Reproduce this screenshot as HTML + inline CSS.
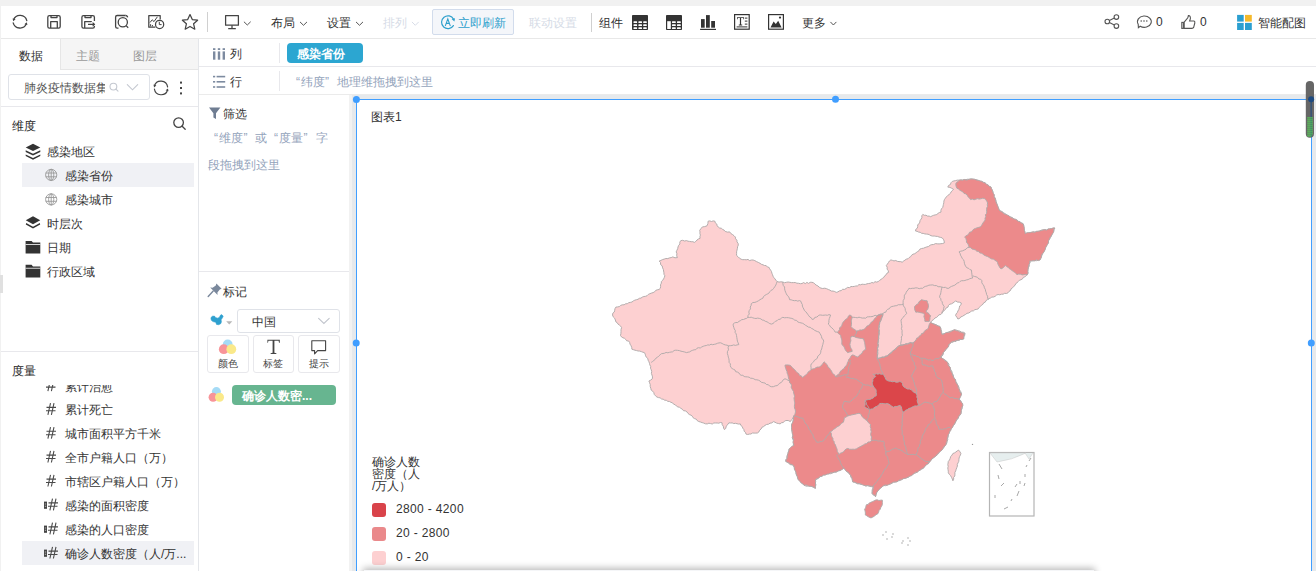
<!DOCTYPE html>
<html><head><meta charset="utf-8">
<style>
*{box-sizing:border-box;margin:0;padding:0}
html,body{width:1316px;height:571px;overflow:hidden;background:#fff;font-family:"Liberation Sans",sans-serif;font-size:12px;color:#333}
.a{position:absolute}
.t{position:absolute;line-height:16px;white-space:nowrap}
svg{position:absolute;overflow:visible}
</style></head><body>
<!-- top strip -->
<div class="a" style="left:0;top:0;width:1316px;height:6px;background:#f1f1f1"></div>
<div class="a" style="left:0;top:6px;width:1px;height:565px;background:#f1f1f1"></div>
<!-- toolbar texts -->
<div class="t" style="left:271px;top:15px">布局</div>
<div class="t" style="left:327px;top:15px">设置</div>
<div class="t" style="left:383px;top:15px;color:#d5dbe6">排列</div>
<div class="a" style="left:432px;top:9px;width:82px;height:26px;background:#f4f6fa;border:1px solid #d2dcec;border-radius:2px"></div>
<div class="t" style="left:458px;top:15px;color:#2ea0cc">立即刷新</div>
<div class="t" style="left:529px;top:15px;color:#d5dbe6">联动设置</div>
<div class="t" style="left:599px;top:15px">组件</div>
<div class="t" style="left:802px;top:15px">更多</div>
<div class="t" style="left:1156px;top:14px">0</div>
<div class="t" style="left:1200px;top:14px">0</div>
<div class="t" style="left:1258px;top:15px">智能配图</div>
<!-- toolbar border -->
<div class="a" style="left:1px;top:38px;width:1315px;height:1px;background:#e8e8e8"></div>

<!-- ===== LEFT PANEL ===== -->
<div class="a" style="left:198px;top:39px;width:1px;height:532px;background:#e4e6ea"></div>
<!-- tabs -->
<div class="a" style="left:60px;top:39px;width:138px;height:30px;background:#f5f5f5"></div>
<div class="a" style="left:60px;top:39px;width:1px;height:30px;background:#e6e6e6"></div>
<div class="a" style="left:60px;top:69px;width:138px;height:1px;background:#e6e6e6"></div>
<div class="t" style="left:19px;top:47.6px;color:#333">数据</div>
<div class="t" style="left:76px;top:47.6px;color:#999">主题</div>
<div class="t" style="left:133px;top:47.6px;color:#999">图层</div>
<!-- search row -->
<div class="a" style="left:8px;top:74px;width:142px;height:26px;border:1px solid #dfe2e8;border-radius:3px"></div>
<div class="t" style="left:24px;top:79.6px;color:#555">肺炎疫情数据集</div>
<div class="a" style="left:105px;top:77px;width:36px;height:20px;background:#fff"></div>
<div class="a" style="left:1px;top:106px;width:197px;height:1px;background:#e8e8ec"></div>
<!-- 维度 -->
<div class="t" style="left:12px;top:117.6px;color:#1e1e1e">维度</div>
<div class="a" style="left:22px;top:163px;width:172px;height:24px;background:#f0f1f5"></div>
<div class="t" style="left:47px;top:143.6px">感染地区</div>
<div class="t" style="left:65px;top:167.6px">感染省份</div>
<div class="t" style="left:65px;top:191.6px">感染城市</div>
<div class="t" style="left:47px;top:215.6px">时层次</div>
<div class="t" style="left:47px;top:239.6px">日期</div>
<div class="t" style="left:47px;top:263.6px">行政区域</div>
<div class="a" style="left:0;top:275px;width:3px;height:18px;background:#e0e0e0"></div>
<div class="a" style="left:1px;top:351px;width:197px;height:1px;background:#e8e8ec"></div>
<div class="t" style="left:12px;top:362.6px;color:#1e1e1e">度量</div>
<div class="a" style="left:22px;top:541px;width:172px;height:24px;background:#f0f1f5"></div>
<div class="a" style="left:1px;top:385px;width:197px;height:186px;overflow:hidden">
  <svg style="left:0;top:0" width="197" height="186"><path d="M49.5,-5.5000000000000115 L46.9,6.099999999999989 M53,-5.5000000000000115 L50.4,6.099999999999989 M45.5,-1.3000000000000114 H55 M45,2.0999999999999885 H54.5 M49.5,18.199999999999978 L46.9,29.799999999999976 M53,18.199999999999978 L50.4,29.799999999999976 M45.5,22.399999999999977 H55 M45,25.799999999999976 H54.5 M49.5,42.10000000000001 L46.9,53.70000000000001 M53,42.10000000000001 L50.4,53.70000000000001 M45.5,46.30000000000001 H55 M45,49.70000000000001 H54.5 M49.5,65.90000000000002 L46.9,77.50000000000003 M53,65.90000000000002 L50.4,77.50000000000003 M45.5,70.10000000000002 H55 M45,73.50000000000003 H54.5 M49.5,89.90000000000002 L46.9,101.50000000000003 M53,89.90000000000002 L50.4,101.50000000000003 M45.5,94.10000000000002 H55 M45,97.50000000000003 H54.5 M51.5,113.69999999999997 L48.9,125.29999999999998 M55,113.69999999999997 L52.4,125.29999999999998 M47.5,117.89999999999998 H57 M47,121.29999999999998 H56.5 M51.5,137.7 L48.9,149.29999999999998 M55,137.7 L52.4,149.29999999999998 M47.5,141.89999999999998 H57 M47,145.29999999999998 H56.5 M51.5,161.90000000000003 L48.9,173.50000000000003 M55,161.90000000000003 L52.4,173.50000000000003 M47.5,166.10000000000002 H57 M47,169.50000000000003 H56.5" fill="none" stroke="#4a4a4a" stroke-width="1.1"/></svg>
  <div class="t" style="left:64px;top:-6px">累计治愈</div>
  <div class="t" style="left:64px;top:17px">累计死亡</div>
  <div class="t" style="left:64px;top:41px">城市面积平方千米</div>
  <div class="t" style="left:64px;top:65px">全市户籍人口（万）</div>
  <div class="t" style="left:64px;top:89px">市辖区户籍人口（万）</div>
  <div class="t" style="left:64px;top:113px">感染的面积密度</div>
  <div class="t" style="left:64px;top:137px">感染的人口密度</div>
  <div class="t" style="left:64px;top:161px">确诊人数密度（人/万...</div>
</div>

<!-- ===== SHELF ROWS ===== -->
<div class="a" style="left:199px;top:66px;width:1117px;height:1px;background:#e8e8ec"></div>
<div class="a" style="left:199px;top:94px;width:1117px;height:1px;background:#ebebeb"></div>
<div class="a" style="left:279px;top:43px;width:1px;height:20px;background:#e8e8ec"></div>
<div class="a" style="left:279px;top:71px;width:1px;height:20px;background:#e8e8ec"></div>
<div class="t" style="left:230px;top:45.6px">列</div>
<div class="t" style="left:230px;top:73.6px">行</div>
<div class="a" style="left:287px;top:43px;width:76px;height:20px;background:#2ca6d1;border-radius:4px"></div>
<div class="t" style="left:297px;top:46.1px;color:#fff;font-weight:bold">感染省份</div>
<div class="t" style="left:296px;top:73.6px;color:#93a3bb">“</div><div class="t" style="left:301px;top:73.6px;color:#93a3bb">纬度</div><div class="t" style="left:325px;top:73.6px;color:#93a3bb">”</div><div class="t" style="left:337px;top:73.6px;color:#93a3bb">地理维拖拽到这里</div>

<!-- ===== MIDDLE PANEL ===== -->
<div class="t" style="left:223px;top:105.6px">筛选</div>
<div class="t" style="left:214px;top:129.6px;color:#93a3bb">“</div><div class="t" style="left:219px;top:129.6px;color:#93a3bb">维度</div><div class="t" style="left:243.5px;top:129.6px;color:#93a3bb">”</div><div class="t" style="left:255px;top:129.6px;color:#93a3bb">或</div><div class="t" style="left:274px;top:129.6px;color:#93a3bb">“</div><div class="t" style="left:279px;top:129.6px;color:#93a3bb">度量</div><div class="t" style="left:303.5px;top:129.6px;color:#93a3bb">”</div><div class="t" style="left:315.5px;top:129.6px;color:#93a3bb">字</div>
<div class="t" style="left:208px;top:156.6px;color:#93a3bb">段拖拽到这里</div>
<div class="a" style="left:199px;top:271px;width:151px;height:1px;background:#e8e8ec"></div>
<div class="t" style="left:223px;top:283.6px">标记</div>
<div class="a" style="left:237px;top:309px;width:103px;height:24px;border:1px solid #dfe2e8;border-radius:3px"></div>
<div class="t" style="left:252px;top:313.6px">中国</div>
<div class="a" style="left:207px;top:335px;width:42px;height:38px;border:1px solid #e8e8ec;border-radius:3px"></div>
<div class="a" style="left:253px;top:335px;width:41px;height:38px;border:1px solid #e8e8ec;border-radius:3px"></div>
<div class="a" style="left:298px;top:335px;width:42px;height:38px;border:1px solid #e8e8ec;border-radius:3px"></div>
<div class="t" style="left:218px;top:356.6px;font-size:10px;line-height:14px;color:#444">颜色</div>
<div class="t" style="left:263px;top:356.6px;font-size:10px;line-height:14px;color:#444">标签</div>
<div class="t" style="left:309px;top:356.6px;font-size:10px;line-height:14px;color:#444">提示</div>
<div class="a" style="left:232px;top:385px;width:104px;height:20px;background:#67b590;border-radius:4px"></div>
<div class="t" style="left:242px;top:387.6px;color:#fff;font-weight:bold">确诊人数密...</div>

<!-- ===== CANVAS ===== -->
<div class="a" style="left:349px;top:95px;width:967px;height:476px;background:#e6e9ec"></div>
<div class="a" style="left:349px;top:95px;width:3px;height:476px;background:#f2f2f2"></div>
<div class="a" style="left:356px;top:99px;width:956px;height:472px;background:#fff;border:1px solid #409eff;border-bottom:none"></div>
<div class="t" style="left:371px;top:109px">图表1</div>
<div class="t" style="left:372px;top:456px;line-height:12px;color:#333">确诊人数<br>密度（人<br>/万人）</div>
<div class="a" style="left:372px;top:503px;width:14px;height:14px;border-radius:3px;background:#d9434a"></div>
<div class="a" style="left:372px;top:527px;width:14px;height:14px;border-radius:3px;background:#ea898b"></div>
<div class="a" style="left:372px;top:551px;width:14px;height:14px;border-radius:3px;background:#fdd0d1"></div>
<div class="t" style="left:396px;top:501px;color:#333;letter-spacing:0.35px">2800 - 4200</div>
<div class="t" style="left:396px;top:525px;color:#333;letter-spacing:0.35px">20 - 2800</div>
<div class="t" style="left:396px;top:549px;color:#333;letter-spacing:0.35px">0 - 20</div>
<div class="a" style="left:364px;top:570px;width:730px;height:10px;background:#f5f6f8;box-shadow:0 -1px 7px 1px rgba(0,0,0,0.28)"></div>
<svg style="left:0;top:0" width="1316" height="571" viewBox="0 0 1316 571">
<polygon points="612.5,315.0 612.8,313.2 614.3,312.0 614.7,310.3 615.0,308.6 615.9,307.1 617.6,306.9 619.3,306.6 620.7,305.4 622.3,304.8 624.1,304.8 625.6,303.8 627.3,303.7 628.7,302.7 630.3,302.4 632.0,302.0 633.3,300.9 634.8,300.2 636.4,299.7 638.0,299.3 639.3,298.3 641.0,298.1 642.3,297.1 643.9,296.5 645.5,296.3 647.1,295.7 648.3,294.4 649.9,293.7 651.4,293.1 653.1,292.6 654.6,291.8 655.7,290.4 657.3,289.8 659.0,289.5 660.3,288.3 660.6,286.6 660.5,284.8 661.3,283.2 661.4,281.5 662.6,280.3 663.6,278.9 664.3,277.4 664.9,275.8 664.0,274.4 663.9,272.7 663.6,271.0 663.3,269.4 662.6,267.9 662.2,265.9 660.6,264.6 660.5,262.5 659.2,261.0 660.9,260.4 662.5,259.6 664.2,259.1 665.9,258.5 667.8,258.6 669.4,257.9 671.2,257.6 672.8,256.9 675.0,257.8 677.4,257.6 676.7,255.8 676.9,253.7 676.2,251.9 676.9,250.3 677.7,248.7 678.0,247.0 678.6,245.4 679.9,244.0 679.8,242.1 680.8,240.6 682.7,240.3 684.6,241.0 686.5,240.6 688.0,241.2 689.6,241.4 691.2,241.7 692.9,241.7 694.4,242.4 695.8,241.4 697.0,240.0 698.4,239.0 700.1,238.3 699.9,236.7 700.4,235.1 699.9,233.5 700.0,231.9 699.7,230.3 701.0,228.6 702.4,226.9 704.7,226.6 707.0,225.8 707.9,223.6 708.1,221.2 709.8,220.9 711.5,221.5 713.2,220.9 714.9,221.2 715.3,222.9 716.8,224.1 717.2,225.8 718.3,227.1 719.6,228.0 721.4,228.3 722.6,229.4 724.1,230.1 725.2,231.4 727.4,232.1 729.7,231.9 730.8,233.5 732.5,234.5 734.0,235.7 735.4,237.1 735.6,238.8 736.9,240.2 737.0,241.9 738.1,243.4 738.3,245.1 737.6,246.7 737.4,248.4 737.0,250.1 736.6,251.8 736.6,253.6 736.5,255.3 738.0,256.7 739.4,258.1 741.1,259.2 742.8,259.7 744.5,259.6 746.2,259.8 748.0,259.4 749.6,260.6 751.4,260.0 753.1,260.0 754.8,260.6 756.5,261.6 758.3,262.4 760.0,263.3 761.4,264.3 763.0,264.8 764.5,265.5 766.2,265.6 767.4,267.0 769.1,267.4 769.7,268.9 770.7,270.2 771.5,271.6 771.9,273.2 772.5,274.7 773.1,276.3 773.9,277.7 775.0,278.9 776.0,280.3 777.1,281.5 779.0,282.1 780.9,281.8 782.8,282.0 784.5,282.7 786.3,282.3 788.1,282.0 789.9,282.3 791.6,282.6 793.4,282.6 795.2,282.5 796.9,283.2 798.7,283.3 800.4,283.7 802.0,283.5 803.6,282.6 805.3,283.6 806.9,282.4 808.6,283.4 810.2,282.3 811.8,282.3 813.5,282.7 814.8,284.0 816.2,285.1 817.9,285.9 819.2,287.2 820.9,288.1 822.7,288.5 824.8,288.2 826.6,288.7 828.3,289.5 829.9,290.1 831.3,291.0 833.1,291.1 834.7,291.5 836.2,292.4 837.9,291.9 839.4,290.9 841.2,290.6 842.6,289.3 844.5,289.4 846.1,288.5 847.5,287.4 849.5,287.6 851.0,286.5 852.7,286.6 854.3,286.4 855.8,286.0 857.5,285.9 858.9,284.6 860.6,284.8 862.1,284.2 863.8,284.4 865.4,284.4 867.0,283.8 868.6,283.5 870.3,283.3 871.8,282.5 873.5,282.9 875.0,281.7 876.7,282.1 878.3,281.5 879.6,280.4 881.0,279.4 882.4,278.4 883.8,277.4 884.7,275.8 886.1,274.8 887.0,273.1 888.6,272.4 888.2,270.6 887.1,269.1 887.2,267.2 886.3,265.6 887.4,264.1 888.4,262.6 889.4,261.0 890.9,259.9 892.5,260.4 894.0,260.9 895.8,260.5 897.3,261.3 899.0,261.6 900.6,261.6 902.2,262.2 903.5,261.1 904.9,260.2 906.2,259.2 907.9,258.8 909.1,257.6 910.6,256.7 911.6,255.2 913.0,254.2 914.8,253.7 916.1,252.7 917.5,251.6 919.0,250.7 919.9,249.1 921.6,248.5 923.5,248.2 925.1,247.5 926.9,246.9 928.7,246.4 930.1,245.2 931.9,244.6 933.7,244.5 935.4,243.6 937.3,243.8 939.1,243.9 940.9,243.7 942.7,243.5 944.4,242.8 944.1,240.9 943.3,239.2 942.1,237.8 940.5,237.4 939.0,237.0 937.4,236.4 935.8,236.3 934.2,236.0 932.6,236.1 931.0,235.7 929.5,234.8 928.0,234.2 926.4,234.1 924.8,233.9 923.2,233.4 921.6,233.3 920.2,232.3 918.6,232.1 917.1,231.3 915.5,231.0 915.8,229.3 917.3,228.2 917.7,226.6 917.7,224.7 919.2,223.6 919.8,222.1 920.1,220.4 921.1,219.1 921.9,217.6 921.8,215.8 922.8,214.4 924.3,215.3 926.0,215.2 927.5,216.1 929.2,216.1 930.7,216.7 932.1,215.9 933.6,215.3 935.2,214.9 936.8,214.5 938.0,213.4 939.4,212.5 941.0,212.1 940.9,210.4 941.4,208.9 942.7,207.5 943.1,205.9 943.4,204.4 943.8,202.8 943.9,201.1 944.4,199.6 945.4,198.2 946.4,196.8 947.6,195.6 949.1,194.5 950.4,193.4 951.1,191.8 952.4,190.6 953.5,189.3 951.7,188.3 949.9,187.4 947.8,187.1 948.6,185.4 950.4,184.5 951.0,182.7 952.3,181.4 954.0,180.9 955.7,180.6 957.4,180.1 959.2,180.2 960.9,180.0 962.6,180.0 964.3,179.5 966.0,179.6 967.7,179.2 969.4,179.3 971.1,178.9 972.8,179.1 974.6,179.7 976.5,179.6 978.2,180.6 980.0,181.2 981.9,181.4 983.5,182.3 985.2,182.9 986.3,184.5 988.2,184.9 989.3,186.4 991.0,187.1 991.5,188.7 992.1,190.2 993.0,191.7 992.8,193.5 994.1,194.8 994.1,196.6 995.2,198.0 995.6,199.6 996.1,201.3 996.6,203.0 997.2,204.6 997.7,206.3 998.4,207.9 999.2,209.5 1000.1,211.0 1001.9,211.4 1003.3,212.5 1004.8,213.5 1006.2,214.5 1007.4,215.8 1009.1,216.6 1010.8,217.0 1012.5,217.6 1013.8,218.9 1015.2,219.8 1017.1,219.9 1018.3,221.4 1019.9,221.9 1021.3,222.8 1022.9,223.5 1023.6,225.1 1023.8,226.9 1023.9,228.6 1024.2,230.3 1024.5,232.1 1025.2,233.7 1026.9,233.6 1028.4,233.1 1030.1,232.8 1031.7,232.5 1033.2,231.6 1035.0,232.2 1036.5,231.4 1038.2,231.3 1039.9,231.0 1041.4,230.1 1043.1,229.9 1044.8,229.5 1046.6,230.0 1048.1,229.1 1049.9,229.3 1051.5,228.9 1053.1,228.3 1054.8,228.0 1054.2,229.7 1053.5,231.3 1052.3,232.6 1052.1,234.4 1051.3,236.0 1050.5,237.6 1049.5,239.1 1048.6,240.7 1048.3,242.6 1047.5,244.2 1046.0,245.5 1045.7,247.4 1044.7,248.8 1044.5,250.6 1043.2,251.9 1042.8,253.6 1041.9,255.1 1041.4,256.8 1040.7,258.4 1040.0,259.9 1038.3,260.0 1036.6,260.7 1034.9,260.6 1033.2,260.9 1031.4,260.7 1029.7,261.0 1029.9,262.8 1029.2,264.4 1029.2,266.2 1028.4,267.8 1028.0,269.5 1027.5,271.2 1027.8,273.0 1027.4,274.7 1026.1,275.7 1024.9,276.8 1023.3,277.4 1022.5,278.9 1021.0,279.7 1019.4,280.3 1018.3,281.5 1017.1,282.7 1015.7,283.7 1015.0,285.4 1013.6,286.5 1012.6,287.8 1011.1,288.8 1010.5,290.5 1009.0,291.4 1008.0,292.8 1006.4,293.5 1004.7,293.3 1003.1,294.2 1001.5,294.2 999.8,294.8 998.1,294.5 996.5,295.1 995.2,296.3 993.6,297.0 991.8,297.1 990.4,298.1 988.8,298.6 987.4,299.7 986.0,300.6 985.3,302.1 983.7,302.8 982.9,304.3 981.5,305.2 980.4,306.3 979.3,307.5 978.3,308.8 976.7,309.4 974.9,309.6 973.5,310.8 971.7,311.0 970.2,312.0 968.8,313.0 967.0,313.3 965.6,314.4 964.0,315.3 962.5,316.3 960.8,316.9 959.7,318.4 957.9,319.0 956.9,317.2 955.6,315.6 956.1,313.9 957.3,312.6 957.9,311.0 958.8,309.5 959.3,307.8 959.6,306.0 961.0,304.8 961.3,303.0 959.4,302.2 957.3,302.0 955.6,300.8 954.4,302.1 953.0,302.9 951.6,303.8 949.9,304.2 948.5,305.3 948.0,307.1 946.2,307.9 945.3,309.4 944.2,310.7 942.7,311.7 941.9,313.3 940.8,314.5 938.9,314.8 937.9,316.2 936.7,317.3 935.1,317.9 933.7,319.5 931.9,320.7 930.6,322.4 932.0,323.5 933.7,323.7 935.1,324.7 936.8,324.8 938.1,326.2 939.8,326.4 940.7,327.9 940.8,329.6 941.6,331.1 941.7,332.8 942.1,334.4 943.6,333.5 945.4,333.8 946.8,332.7 948.3,332.1 949.9,331.4 951.4,330.9 953.0,330.3 954.6,329.8 956.4,330.1 958.0,331.1 959.9,331.0 961.4,332.2 963.3,332.2 964.9,333.2 964.8,335.2 963.6,336.9 963.7,338.9 962.0,338.9 960.5,339.4 959.1,340.5 957.3,340.1 956.0,341.5 954.2,341.1 952.9,342.3 951.2,342.3 950.0,343.4 949.1,344.8 948.3,346.2 947.5,347.6 946.3,348.7 945.6,350.2 944.4,351.4 943.4,352.7 943.1,354.5 942.3,355.9 941.0,357.1 942.3,358.3 943.7,359.4 945.4,360.2 946.3,361.8 947.8,362.8 948.9,364.1 948.9,365.9 950.0,367.2 950.2,368.9 951.3,370.3 952.0,371.8 952.1,373.5 953.2,374.8 953.5,376.5 953.9,378.2 955.1,379.5 955.3,381.3 956.6,382.5 957.2,384.1 958.0,385.6 958.9,387.0 959.2,388.6 959.5,390.2 960.7,391.5 961.3,393.0 961.4,394.7 960.3,396.0 959.6,397.5 959.2,399.2 960.6,400.5 961.3,402.4 962.6,403.8 962.5,405.5 962.4,407.2 962.1,408.8 961.1,410.3 961.3,412.1 960.9,413.7 960.0,415.3 958.6,416.5 958.2,418.3 957.0,419.7 955.8,421.1 955.2,422.8 954.4,424.4 953.1,425.7 952.3,427.3 951.1,428.7 950.7,430.5 949.5,431.9 948.6,433.3 948.3,434.9 948.2,436.6 947.6,438.1 947.8,439.8 947.0,441.3 946.9,442.9 946.1,444.4 944.7,445.5 944.2,447.4 942.7,448.4 941.9,450.0 940.0,450.7 939.2,452.3 938.4,453.8 937.2,454.9 936.0,455.9 934.4,456.6 933.5,458.0 932.1,458.9 931.0,460.1 930.1,461.4 929.2,462.8 927.6,463.4 926.4,464.6 925.4,465.8 924.1,466.9 923.3,468.3 921.7,469.0 920.3,470.0 918.6,470.6 917.3,471.9 915.9,473.0 914.0,473.2 912.7,474.5 911.1,475.1 909.7,476.2 908.3,477.3 906.5,477.7 904.8,478.1 903.1,478.7 901.5,479.3 900.1,480.5 898.3,480.8 896.7,481.5 895.2,482.1 893.4,482.1 892.0,483.3 890.4,484.0 888.7,484.2 887.2,485.1 885.6,485.7 883.8,485.5 882.3,486.5 880.7,487.9 878.9,489.1 877.8,491.0 876.6,492.7 876.0,494.7 875.5,496.7 874.5,495.4 872.9,494.8 872.1,493.3 872.0,491.5 872.2,489.8 872.7,488.2 873.2,486.5 871.3,486.7 869.5,486.4 867.8,485.6 865.8,486.1 864.1,485.3 862.6,484.3 860.8,484.4 859.2,483.9 857.5,483.8 856.0,482.9 854.4,482.3 852.8,481.9 852.6,480.1 851.9,478.4 850.7,476.9 850.5,475.1 849.3,474.0 848.5,472.6 847.1,471.7 845.8,470.8 845.2,469.1 843.7,468.3 841.7,469.1 840.0,470.5 838.0,470.7 836.4,472.0 834.4,472.3 832.5,472.8 830.8,473.7 828.8,473.6 827.0,474.0 825.2,474.6 823.4,475.1 821.9,476.2 820.0,476.7 818.6,477.8 817.2,479.1 815.4,479.7 815.0,481.4 815.4,483.1 815.8,484.9 815.5,486.6 815.4,488.3 813.7,487.5 812.0,486.5 810.4,486.4 808.9,485.6 807.1,486.3 805.6,485.9 804.0,485.3 802.6,483.9 801.2,482.4 799.9,480.9 798.3,479.7 797.9,478.2 797.4,476.6 796.5,475.2 796.1,473.7 796.0,472.0 795.4,470.6 794.7,469.1 794.3,467.5 793.8,466.0 792.3,464.9 790.3,464.6 788.8,463.5 787.5,462.2 785.8,461.4 785.8,459.7 787.0,458.4 786.8,456.6 787.4,455.1 788.0,453.6 788.3,452.0 788.7,450.4 789.2,448.9 791.0,448.1 792.4,446.8 793.8,445.5 793.2,443.9 793.8,442.2 793.7,440.6 792.7,439.1 792.3,437.5 792.6,435.9 792.8,434.2 792.8,432.6 791.7,431.1 792.0,429.4 792.1,427.8 791.5,426.2 791.6,424.4 792.7,422.9 793.1,421.2 793.4,419.4 793.5,417.6 793.8,415.9 793.2,417.5 792.5,419.0 791.2,420.1 790.4,421.6 788.2,420.5 785.8,420.5 784.4,421.4 783.1,422.5 781.4,422.8 780.1,423.9 778.3,423.5 776.6,423.1 775.0,422.2 773.3,421.6 771.9,422.9 770.0,423.2 768.5,424.2 766.6,424.5 765.0,425.4 763.6,426.6 761.9,427.3 761.1,429.0 759.7,430.2 758.9,431.9 757.4,433.0 755.8,433.1 754.1,433.1 752.5,433.0 750.9,434.0 749.3,434.1 747.7,434.5 746.0,434.1 745.5,432.4 744.2,431.3 743.9,429.6 742.8,428.2 742.3,426.6 740.9,425.5 740.3,423.9 738.6,424.1 737.0,423.7 735.4,423.3 733.8,423.6 732.2,422.9 730.5,423.0 728.9,422.8 728.0,424.1 726.9,425.4 726.1,426.8 725.7,428.5 724.4,429.6 723.6,428.0 723.3,426.2 722.2,424.7 722.1,422.8 720.4,422.5 718.8,423.2 717.2,423.0 715.5,423.0 713.8,423.0 712.3,424.0 710.6,423.6 708.9,423.2 707.3,423.9 705.4,423.8 703.8,423.1 702.1,422.6 700.4,422.0 698.7,421.5 697.1,420.5 696.2,419.1 694.5,418.6 693.1,417.7 692.3,416.2 691.0,415.2 689.3,414.5 688.0,413.4 686.9,411.8 685.4,410.9 683.5,410.7 682.3,409.2 680.8,408.3 679.5,407.3 677.8,406.9 676.4,406.0 675.2,404.7 673.6,404.2 672.5,402.8 670.9,402.3 669.4,401.5 667.7,401.3 666.3,400.3 664.6,400.2 663.2,399.2 661.5,399.0 660.1,397.8 658.5,397.6 656.9,397.0 655.5,395.8 654.3,394.5 653.8,392.6 652.7,391.2 651.2,390.1 650.8,388.3 650.2,386.5 650.2,384.5 649.6,382.8 648.9,381.0 650.7,380.1 652.3,378.8 652.5,376.9 652.0,375.1 651.4,373.4 651.7,371.5 651.2,369.7 650.5,368.2 650.7,366.4 649.8,364.9 649.5,363.3 648.9,361.7 648.1,360.2 647.8,358.5 646.4,357.3 645.6,355.8 645.2,354.1 644.4,352.6 642.8,352.2 641.3,351.6 639.8,351.1 638.1,351.0 636.6,350.6 635.0,350.2 633.4,349.7 631.9,349.2 631.7,347.3 631.0,345.7 630.0,344.1 629.6,342.3 628.6,341.0 626.7,340.8 625.7,339.4 624.5,338.3 622.9,337.8 621.5,336.9 620.5,335.5 620.9,333.5 621.0,331.5 621.0,329.5 621.6,327.6 620.7,326.2 619.5,325.2 618.1,324.2 617.3,322.8 615.9,321.9 615.4,320.0 614.6,318.2 613.2,316.8" fill="#fdd0d1" stroke="#b0aaaa" stroke-width="0.95" stroke-linejoin="round"/>
<polygon points="785.0,365.1 786.7,364.9 788.3,365.0 790.0,365.3 791.4,366.4 792.5,367.7 793.7,369.0 795.0,370.1 796.1,371.4 797.3,372.7 798.8,373.6 799.5,375.4 801.4,375.9 802.3,377.5 803.7,376.6 805.0,375.5 806.4,374.5 807.5,373.2 808.4,371.7 809.9,370.9 811.0,369.6 812.6,368.9 814.3,368.7 815.7,367.7 817.3,367.1 819.2,367.1 820.6,366.1 822.0,364.8 823.0,363.3 824.2,361.8 825.5,363.0 826.6,364.2 827.6,365.6 828.2,367.3 829.7,368.3 830.5,369.8 831.6,371.1 832.1,372.8 833.5,373.9 834.7,375.1 835.5,376.6 836.8,375.5 838.1,374.4 839.5,373.4 840.1,371.6 841.4,370.5 842.6,369.3 844.2,368.5 844.7,366.9 846.2,365.8 847.0,364.3 847.4,362.6 848.3,361.2 848.6,359.5 849.9,358.3 850.8,356.4 852.2,354.9 854.2,355.3 856.0,356.5 857.9,357.1 859.0,355.6 860.5,354.4 862.0,353.3 862.8,351.5 864.1,350.2 865.8,349.2 865.4,347.5 865.1,345.8 864.9,344.0 864.6,342.3 864.0,340.6 863.6,338.9 861.8,338.5 859.9,338.3 858.0,337.9 856.1,337.5 854.4,336.7 854.8,334.7 856.4,333.1 856.7,331.0 858.3,330.7 859.9,329.9 861.6,330.0 863.2,329.6 864.7,328.7 865.9,327.6 866.8,326.2 868.3,325.5 869.6,324.5 870.5,323.2 871.5,321.9 873.0,321.1 873.9,319.7 874.8,318.3 876.2,317.4 876.9,315.9 878.3,315.0 880.5,314.0 882.9,313.9 882.7,315.7 882.0,317.4 881.5,319.1 880.7,320.7 879.9,322.3 879.5,324.1 878.8,325.7 878.9,327.3 878.7,328.9 879.1,330.5 879.3,332.1 879.2,333.7 878.9,335.3 878.6,336.9 878.5,338.5 878.3,340.1 878.0,341.7 878.0,343.4 878.3,345.1 877.6,346.7 877.3,348.3 877.6,350.0 877.3,351.7 877.2,353.3 877.4,355.0 877.5,356.7 877.2,358.3 879.0,358.4 880.7,357.9 882.3,357.0 884.1,357.2 885.6,356.0 887.4,356.0 888.4,354.6 889.9,353.7 891.5,352.9 892.4,351.4 893.6,350.1 895.3,349.6 896.3,348.1 897.6,347.0 898.8,345.8 901.0,345.2 902.6,344.7 904.2,344.6 905.8,344.1 907.5,344.2 909.0,343.5 910.4,342.5 912.2,343.2 913.7,342.3 914.9,341.2 916.0,339.9 916.6,338.2 918.4,337.6 919.2,336.1 920.8,335.3 921.6,333.5 923.5,333.1 924.3,331.4 925.5,330.1 927.1,329.4 928.3,328.1 928.8,326.1 929.4,324.1 930.6,322.4 932.1,323.2 933.5,324.0 935.2,324.4 936.5,325.5 938.2,325.9 939.8,326.4 940.6,327.9 941.0,329.5 941.0,331.3 941.5,332.8 942.1,334.4 943.8,334.1 945.1,333.0 946.7,332.5 948.5,332.4 950.1,332.0 951.6,331.3 953.1,330.5 954.6,329.8 956.2,330.7 958.1,330.8 959.6,331.9 961.4,332.3 963.0,333.1 964.9,333.2 964.1,335.0 963.9,337.0 963.7,338.9 962.2,339.6 960.5,339.4 958.9,339.7 957.4,340.4 955.8,340.7 954.3,341.3 952.6,341.4 951.2,342.3 950.0,343.4 948.8,344.6 948.6,346.4 947.6,347.7 946.5,348.9 945.2,350.0 944.4,351.4 943.2,352.6 942.8,354.3 941.4,355.4 941.0,357.1 942.2,358.4 943.9,359.2 945.0,360.7 946.8,361.3 947.8,362.8 948.0,364.5 948.6,366.0 950.2,367.2 950.4,368.9 950.6,370.6 951.4,372.0 952.3,373.4 952.5,375.1 953.5,376.5 953.9,378.2 955.4,379.3 955.8,381.0 956.1,382.8 957.1,384.1 958.0,385.6 958.2,387.3 958.8,388.7 959.8,390.1 959.9,391.8 961.0,393.1 961.4,394.7 960.8,396.2 960.1,397.8 959.2,399.2 960.4,400.7 961.5,402.3 962.6,403.8 962.9,405.5 961.9,407.1 961.6,408.7 961.3,410.4 961.0,412.0 960.9,413.7 959.6,415.0 958.7,416.5 958.1,418.3 956.7,419.5 956.0,421.2 955.2,422.8 954.3,424.3 953.2,425.8 952.5,427.5 951.3,428.8 950.4,430.4 949.5,431.9 949.2,433.5 948.1,434.9 947.9,436.5 947.5,438.1 947.1,439.6 947.0,441.3 946.2,442.8 946.1,444.4 945.1,445.9 943.6,446.9 943.0,448.6 941.9,450.0 940.7,451.3 939.2,452.3 938.1,453.4 937.0,454.7 935.8,455.7 934.8,457.0 933.4,457.8 932.0,458.8 931.1,460.1 930.1,461.4 928.6,462.2 928.2,464.0 926.3,464.5 925.5,466.0 924.2,467.0 923.3,468.3 921.6,468.9 920.2,470.0 918.7,470.7 917.5,472.3 915.5,472.2 914.2,473.5 912.8,474.6 911.4,475.7 909.7,476.2 908.2,477.1 906.6,477.9 904.9,478.4 903.2,478.7 901.7,479.8 899.8,479.9 898.3,480.8 896.9,481.9 895.1,481.9 893.4,482.2 891.9,483.0 890.4,483.8 888.8,484.6 887.2,485.2 885.4,485.0 883.8,485.6 882.3,486.5 880.8,488.0 879.2,489.4 877.8,491.0 876.6,492.7 876.0,494.7 875.5,496.7 874.7,495.2 873.2,494.5 872.1,493.3 872.6,491.6 872.8,489.9 873.3,488.3 873.2,486.5 871.4,486.2 869.6,485.9 867.8,485.6 865.9,485.7 864.1,485.3 862.5,484.8 861.0,484.0 859.4,483.5 857.6,483.4 856.0,482.8 854.5,482.1 852.8,481.9 852.3,480.2 852.1,478.4 851.4,476.7 850.5,475.1 849.4,473.9 848.6,472.5 847.0,471.8 845.9,470.6 845.0,469.3 843.7,468.3 841.9,469.6 840.0,470.5 838.1,471.0 836.3,471.9 834.3,472.1 832.5,472.8 830.6,472.8 828.9,474.0 827.0,474.1 825.3,475.1 823.4,475.1 821.9,476.3 819.9,476.5 818.8,478.1 816.9,478.6 815.4,479.7 815.7,481.4 815.4,483.1 815.7,484.9 815.2,486.6 815.4,488.3 813.8,487.3 812.0,486.5 810.4,486.2 808.8,486.3 807.3,485.3 805.7,485.0 804.0,485.3 802.8,483.7 800.9,482.8 799.7,481.1 798.3,479.7 797.6,478.2 797.3,476.6 796.7,475.2 796.1,473.7 795.9,472.0 795.1,470.6 794.3,469.2 794.3,467.5 793.8,466.0 792.4,464.7 790.6,464.2 789.1,463.0 787.4,462.3 785.8,461.4 786.1,459.8 787.0,458.4 787.3,456.8 787.4,455.1 787.9,453.6 788.3,452.0 789.0,450.5 789.2,448.9 790.6,447.6 791.9,446.2 793.8,445.5 793.7,443.9 792.9,442.3 793.3,440.7 793.5,439.0 792.4,437.5 793.1,435.8 792.5,434.2 792.0,432.7 792.3,431.0 791.5,429.5 791.5,427.8 791.5,426.2 791.6,424.4 792.4,422.8 793.1,421.1 793.4,419.4 793.3,417.6 793.8,415.9 794.8,414.5 795.3,412.9 795.5,411.2 795.2,409.6 794.5,408.0 794.4,406.3 794.5,404.6 794.9,403.0 794.4,401.3 794.2,399.7 794.0,398.0 794.6,396.3 794.1,394.7 793.7,393.1 793.5,391.5 792.6,390.1 791.8,388.7 791.2,387.2 791.5,385.4 791.0,383.9 789.6,382.7 789.6,381.0 789.0,379.5 788.5,377.9 788.2,376.2 787.8,374.6 787.1,373.1 787.0,371.4 786.2,369.9 785.7,368.3 785.2,366.8" fill="#ec8a8b" stroke="#b0aaaa" stroke-width="0.95" stroke-linejoin="round"/>
<polygon points="830.3,431.8 832.2,430.8 833.6,429.3 835.5,428.3 836.6,427.0 838.2,426.3 839.7,425.5 840.6,424.1 841.9,423.0 843.4,422.2 844.0,420.0 844.3,417.8 846.1,417.0 847.8,416.0 849.5,415.4 851.3,415.0 853.0,414.6 854.8,414.3 856.5,413.8 858.2,413.4 860.0,413.4 861.0,414.6 861.8,416.1 862.8,417.4 864.1,418.4 865.3,419.5 866.9,420.5 868.0,422.1 869.3,423.5 870.6,424.8 870.2,426.6 870.9,428.3 870.8,430.1 871.3,431.8 870.7,433.6 870.8,435.4 871.7,437.1 871.2,438.9 871.4,440.6 870.1,441.9 868.0,442.0 866.8,443.6 864.9,443.9 863.4,444.9 861.8,445.8 860.1,446.7 858.3,447.6 856.7,448.7 854.8,449.3 853.0,449.2 851.2,449.3 849.5,449.2 847.8,448.4 846.1,449.0 844.7,450.2 843.6,451.7 842.0,452.7 840.2,453.2 839.0,454.6 838.3,452.9 837.2,451.3 837.1,449.3 836.4,447.6 835.8,446.1 835.3,444.6 834.2,443.2 834.1,441.5 832.9,440.2 833.0,438.5 832.0,437.1 831.4,435.3 831.4,433.4" fill="#fdd0d1" stroke="#b0aaaa" stroke-width="0.95" stroke-linejoin="round"/>
<polygon points="837.4,332.1 838.7,330.9 839.5,329.6 839.6,327.7 841.1,326.7 841.9,325.2 842.3,323.6 843.2,322.1 844.3,320.9 845.3,319.6 846.8,318.8 847.8,317.5 848.5,315.9 849.9,315.0 851.4,315.8 852.2,317.3 851.7,319.1 851.2,320.9 851.5,322.8 851.5,324.6 851.0,326.4 852.1,327.9 853.7,328.9 855.2,329.9 856.7,331.0 856.4,333.1 855.3,334.9 854.4,336.7 852.7,336.3 851.0,336.7 850.6,338.7 850.9,340.7 850.3,342.6 849.9,344.6 850.3,346.4 850.8,348.1 851.8,349.6 852.2,351.4 849.9,351.9 847.6,352.6 846.5,351.4 845.4,350.1 844.7,348.6 844.2,347.0 843.2,345.7 841.9,344.6 841.8,342.8 841.9,340.9 841.6,339.1 840.9,337.3 840.8,335.5 839.6,334.4 838.3,333.5" fill="#ec8a8b" stroke="#b0aaaa" stroke-width="0.95" stroke-linejoin="round"/>
<polygon points="914.6,306.5 915.7,305.3 917.0,304.3 918.4,303.5 918.9,301.8 920.2,300.8 921.4,299.7 923.3,300.2 925.2,300.6 927.1,300.8 927.5,302.5 928.2,304.1 928.5,305.8 928.3,307.6 927.6,309.6 926.0,311.0 926.8,312.5 928.5,313.1 929.3,314.6 930.6,315.6 930.0,317.5 929.9,319.4 929.4,321.3 927.1,321.4 924.9,321.3 924.8,319.7 924.4,318.1 923.9,316.5 924.4,314.8 923.7,313.3 921.7,312.9 919.8,312.5 917.8,312.0 915.8,312.2 915.0,310.4 914.5,308.5" fill="#ec8a8b" stroke="#b0aaaa" stroke-width="0.95" stroke-linejoin="round"/>
<polygon points="955.8,183.7 956.7,182.3 958.2,181.5 959.2,180.2 960.9,179.9 962.6,180.2 964.3,179.5 966.0,180.1 967.7,179.8 969.4,179.2 971.1,179.0 972.8,179.1 974.7,179.2 976.4,180.1 978.3,180.3 980.1,181.0 981.9,181.4 983.3,182.5 985.2,182.9 986.5,184.2 988.0,185.1 989.3,186.5 991.0,187.1 991.4,188.7 992.4,190.1 992.7,191.8 993.4,193.3 994.2,194.8 994.1,196.6 994.9,198.1 995.6,199.6 995.8,201.4 996.4,203.1 997.2,204.6 997.9,206.2 998.4,207.9 999.0,209.6 1000.1,211.0 1001.7,211.8 1003.1,212.8 1004.4,214.1 1006.3,214.4 1007.8,215.2 1009.4,216.0 1010.6,217.4 1012.3,218.0 1013.8,218.9 1015.5,219.2 1016.9,220.2 1018.3,221.4 1020.0,221.7 1021.2,223.1 1022.9,223.5 1023.6,225.1 1024.0,226.8 1024.4,228.5 1024.3,230.3 1025.1,231.9 1025.2,233.7 1026.7,232.8 1028.3,232.6 1030.0,232.6 1031.6,232.1 1033.3,232.2 1035.0,232.2 1036.5,231.4 1038.2,231.3 1039.9,230.9 1041.5,230.5 1043.1,229.9 1044.8,229.7 1046.6,230.1 1048.1,229.0 1049.8,228.7 1051.5,228.6 1053.1,227.9 1054.8,228.0 1053.6,229.4 1053.8,231.4 1053.1,233.0 1052.1,234.4 1051.3,236.0 1050.1,237.4 1049.5,239.2 1048.5,240.7 1048.5,242.7 1047.6,244.3 1046.7,245.9 1045.7,247.4 1045.4,249.2 1044.6,250.7 1043.9,252.2 1042.5,253.5 1041.7,255.0 1041.5,256.8 1040.8,258.4 1040.0,259.9 1038.3,260.6 1036.5,259.8 1034.9,260.8 1033.1,260.6 1031.4,261.0 1029.7,261.0 1029.9,262.8 1029.0,264.4 1028.6,266.1 1028.2,267.8 1028.0,269.5 1027.9,271.3 1028.1,273.1 1027.4,274.7 1025.7,274.4 1023.9,274.7 1022.2,274.9 1020.5,274.2 1018.7,274.1 1017.0,274.6 1015.8,273.5 1014.7,272.3 1013.3,271.5 1012.0,270.5 1010.7,269.5 1009.3,268.7 1008.3,267.4 1006.8,266.7 1005.7,265.5 1004.1,266.6 1002.8,268.1 1001.0,268.9 999.7,267.5 998.9,265.9 998.0,264.3 997.5,262.5 996.5,261.0 994.9,260.4 993.6,259.1 991.8,259.0 990.3,258.3 988.9,257.3 987.4,256.5 985.8,255.9 984.2,255.2 982.9,254.1 981.4,253.2 979.7,252.9 978.6,251.4 976.8,251.2 975.5,250.0 973.9,249.4 972.1,249.1 970.9,247.7 969.2,247.3 968.5,245.6 968.0,243.8 966.5,242.4 966.4,240.4 965.9,238.6 964.7,237.1 965.9,235.8 967.6,235.1 968.7,233.8 969.6,232.2 971.5,231.8 972.6,230.3 973.8,229.1 975.5,228.4 977.1,227.8 978.9,227.3 980.6,226.8 981.5,225.4 982.4,224.0 983.2,222.6 984.2,221.3 985.2,220.0 985.0,218.2 985.8,216.6 985.4,214.8 986.7,213.3 986.7,211.5 986.6,209.8 986.7,208.1 987.5,206.4 987.3,204.7 987.6,203.0 986.8,201.2 985.7,199.6 984.2,198.4 982.5,198.3 980.8,198.8 979.1,199.1 977.4,198.6 975.7,199.3 974.0,199.8 972.3,199.0 970.6,199.6 969.4,198.1 968.0,196.7 967.1,195.0 965.7,193.9 964.0,193.4 962.9,191.9 961.3,191.1 959.8,190.2 958.5,189.0 956.9,188.2 956.0,186.0" fill="#ec8a8b" stroke="#b0aaaa" stroke-width="0.95" stroke-linejoin="round"/>
<polygon points="872.8,374.1 874.5,374.6 876.2,373.7 877.8,374.2 879.5,373.7 881.2,374.3 882.9,374.1 884.1,375.7 885.1,377.5 885.8,379.4 887.3,380.5 889.0,381.1 890.8,381.3 892.5,381.8 894.2,381.4 896.0,382.2 897.7,382.2 899.5,381.6 901.2,381.8 902.5,383.4 902.8,385.5 904.1,387.1 905.7,388.0 907.4,389.0 909.4,389.0 911.2,389.8 912.7,391.0 913.7,392.3 915.3,392.9 916.6,393.9 917.0,395.5 916.8,397.2 917.7,398.8 917.2,400.5 917.5,402.2 918.1,403.8 918.5,405.4 916.9,406.0 915.0,405.9 913.4,406.5 911.8,407.3 910.3,408.1 908.6,408.5 907.4,409.6 905.8,410.2 904.5,411.3 903.1,412.2 902.2,410.6 901.7,408.8 901.3,406.9 900.2,405.4 898.5,405.8 896.9,406.6 895.1,406.4 893.5,407.3 891.8,406.3 890.3,405.1 888.7,404.0 886.8,403.5 885.1,403.9 883.4,403.5 881.7,403.4 880.0,403.5 878.5,404.9 877.1,406.4 875.4,406.8 874.0,407.9 872.6,408.9 870.8,409.1 869.4,410.2 868.0,408.7 866.1,407.8 864.6,406.4 865.2,404.5 865.0,402.5 865.1,400.6 866.6,400.0 868.2,399.6 869.9,399.5 871.4,398.7 873.2,398.0 874.4,396.5 876.2,395.8 876.4,394.1 876.1,392.4 876.2,390.7 875.7,389.1 874.2,387.7 873.2,386.0 872.3,384.2 872.2,382.6 872.9,381.0 872.8,379.4 873.9,377.6 875.7,376.5 874.4,375.1" fill="#db464a" stroke="#b0aaaa" stroke-width="0.95" stroke-linejoin="round"/>
<polygon points="866.4,504.7 868.2,504.4 869.3,502.9 870.9,502.3 872.5,501.6 874.0,500.9 875.5,500.1 877.2,499.8 878.9,500.5 880.6,500.2 882.3,500.1 882.4,502.4 882.3,504.7 881.6,506.3 880.7,507.7 880.2,509.3 879.0,510.6 878.6,512.3 877.8,513.8 876.0,514.7 874.5,516.0 872.8,517.1 871.0,517.9 869.5,517.4 868.0,516.6 866.7,515.7 865.3,514.9 865.4,513.0 865.1,511.1 864.6,509.2 865.6,507.9 865.9,506.3" fill="#ec8a8b" stroke="#b0aaaa" stroke-width="0.95" stroke-linejoin="round"/>
<polygon points="958.6,450.1 959.9,451.7 960.9,453.5 960.4,455.1 959.6,456.5 959.1,458.0 958.9,459.7 958.8,461.3 958.1,462.8 957.3,464.3 957.4,466.0 956.8,467.6 956.2,469.2 955.7,470.9 954.9,472.4 954.9,474.2 954.8,476.0 953.6,477.4 953.7,479.2 952.9,480.8 952.3,479.0 951.5,477.4 950.6,475.7 949.3,474.3 948.3,472.8 948.3,471.2 948.0,469.5 947.8,467.9 948.2,466.3 947.8,464.7 948.1,463.0 948.3,461.4 949.5,460.0 950.2,458.3 950.7,456.5 952.0,455.1 952.9,453.5 954.5,452.9 955.9,452.0 957.2,450.9" fill="#fdd0d1" stroke="#b0aaaa" stroke-width="0.95" stroke-linejoin="round"/>
<polyline points="777.1,281.5 776.5,283.3 775.8,285.1 774.8,286.7 773.7,288.3 772.7,289.6 771.1,290.3 770.0,291.5 769.1,292.9 767.8,293.8 766.3,294.5 764.9,295.4 763.6,296.4 762.9,298.2 761.4,298.9 760.0,299.7 758.4,300.8 756.7,301.7 754.9,302.4 752.9,302.5 751.3,303.7 751.1,305.5 750.2,307.0 750.5,308.9 749.3,310.4 748.8,312.1 749.3,314.0 748.0,315.5 747.9,317.3 746.6,318.4 745.0,318.8 743.5,319.5 741.8,319.6 740.5,320.6 739.0,321.3 737.7,322.5 735.9,322.5 734.4,323.0 733.1,324.1 733.3,325.8 733.8,327.4 734.3,329.0 735.3,330.5 735.1,332.4 736.1,333.8 736.5,335.5 736.8,337.4 737.1,339.2 737.4,341.1 738.1,342.8 738.8,344.6 737.1,344.9 735.4,345.4 733.7,344.9 732.0,345.5 730.3,345.7 728.6,345.8 727.0,345.2 725.3,344.9 723.7,344.4 722.2,343.5 720.6,342.8 719.0,342.9 717.4,343.3 715.9,344.0 714.3,344.3 712.7,344.7 711.0,344.2 709.5,345.1 707.8,344.9 706.3,345.5 704.7,345.8 703.2,346.3 701.7,347.0 700.3,348.0 698.5,347.7 697.0,348.2 695.8,349.7 694.1,349.8 692.6,350.3 691.1,350.9 689.7,351.9 688.1,352.2 686.5,352.6 684.7,352.0 682.9,351.6 681.0,351.2 679.3,350.6 677.4,350.3 675.7,350.2 674.1,350.5 672.7,351.8 671.1,352.0 669.5,352.3 667.9,352.8 666.1,352.4 664.6,353.2 663.0,353.5 661.4,353.7 660.1,354.8 658.9,355.9 657.7,357.1 656.2,357.9 655.2,359.4 653.9,360.4 652.6,361.5 651.2,362.4" fill="none" stroke="#b0aaaa" stroke-width="0.95" stroke-linejoin="round"/>
<polyline points="747.9,317.3 749.5,317.5 751.2,317.2 752.8,317.8 754.4,318.3 756.0,318.5 757.7,318.1 759.3,318.4 760.9,318.9 762.2,320.0 763.9,320.3 765.3,321.3 767.0,321.8 768.4,322.7 769.8,323.6 771.4,324.1 773.0,323.5 774.3,322.4 775.5,321.2 777.1,320.7 778.3,319.4 780.1,319.3 781.4,318.1 782.8,317.3 784.6,317.8 786.5,317.6 788.3,317.7 790.1,318.1 791.9,318.4 793.4,319.1 794.8,320.2 796.6,320.4 797.7,321.9 799.3,322.5 801.0,322.9 802.7,323.3 804.1,324.2 805.5,325.3 807.0,326.1 808.4,327.1 810.2,327.3 811.5,328.4 813.1,329.1 814.4,330.2 816.0,331.0 817.5,331.6 819.2,332.1 820.0,333.6 820.9,335.1 821.6,336.6 821.8,338.4 823.2,339.5 823.7,341.2 823.2,342.8 822.9,344.3 822.4,345.9 822.0,347.4 821.7,349.0 820.9,350.5 820.8,352.2 820.3,353.7 819.2,355.1 817.7,356.3 817.3,358.3 815.8,359.4 814.4,360.3 813.6,361.8 812.4,362.9 811.2,364.0 810.8,365.9 811.1,367.7 811.0,369.6" fill="none" stroke="#b0aaaa" stroke-width="0.95" stroke-linejoin="round"/>
<polyline points="728.6,345.8 728.1,347.7 728.5,349.8 727.4,351.7 727.4,353.7 728.0,355.4 728.3,357.1 728.9,358.8 729.1,360.6 729.1,362.4 730.4,363.9 730.3,365.7 730.9,367.4 732.1,368.5 733.5,369.3 735.0,370.0 735.7,371.7 737.5,372.1 738.9,372.9 739.8,374.4 741.1,375.3 742.8,375.3 744.2,376.5 745.8,376.8 747.5,376.9 749.1,377.2 750.5,378.2 752.2,378.3 753.8,378.8 755.2,379.7 756.9,379.8 758.5,380.2 760.0,381.0 761.4,382.3 763.2,382.7 765.1,383.1 766.4,384.5 768.4,384.7 769.6,386.1 771.4,386.7 773.4,386.7 775.2,385.9 777.1,385.6 778.5,384.6 779.6,383.2 781.3,382.5 782.4,381.1 783.4,379.6 785.0,378.8 786.6,379.4 788.1,380.3 789.6,381.0" fill="none" stroke="#b0aaaa" stroke-width="0.95" stroke-linejoin="round"/>
<polyline points="782.8,282.0 782.9,283.8 783.3,285.5 784.6,287.0 784.6,288.9 785.0,290.6 785.6,292.2 786.3,293.7 787.1,295.3 788.5,296.5 789.2,298.0 789.6,299.7 791.2,299.8 792.8,300.4 794.4,300.7 796.1,300.5 797.7,301.1 799.5,300.6 801.0,301.4 801.4,303.0 802.3,304.4 802.4,306.1 803.0,307.6 803.8,309.0 804.4,310.5 805.7,311.6 806.8,313.0 807.8,314.4 808.8,315.8 809.9,317.1 811.5,318.0 812.3,319.6 813.9,319.0 814.8,317.4 816.6,317.1 818.0,316.2 819.2,315.0 820.8,315.0 822.5,315.3 824.1,315.2 825.7,315.0 827.3,315.3 829.0,314.6 830.6,315.0 830.0,316.8 829.3,318.5 828.9,320.4 828.9,322.3 828.3,324.1 829.6,325.3 830.5,326.9 831.9,327.9 833.2,329.2 834.3,330.5 835.1,332.1 837.4,332.1" fill="none" stroke="#b0aaaa" stroke-width="0.95" stroke-linejoin="round"/>
<polyline points="852.2,317.3 853.9,317.3 855.6,317.5 857.2,317.8 859.0,317.2 860.6,317.6 862.3,318.1 864.0,318.0 865.7,318.2 867.1,316.9 868.7,316.8 870.4,316.7 872.0,316.6 873.5,316.1 875.1,315.3 876.8,315.8 878.3,315.0 880.7,314.9 882.9,313.9 883.9,312.5 885.8,312.2 886.5,310.4 887.7,309.3 889.4,308.7 890.3,307.2 891.9,306.5 893.5,306.2 895.1,305.8 896.8,305.6 898.3,304.7 900.0,304.8 901.6,304.6 903.2,304.2 903.1,302.3 903.2,300.5 904.3,298.8 904.3,296.9 904.4,295.1 905.6,293.9 906.2,292.4 907.0,290.9 908.2,289.8 908.9,288.3 910.6,288.6 912.3,288.3 914.0,288.3 915.8,287.8 917.5,288.0 919.2,288.7 920.9,288.2 922.6,288.3 923.9,287.1 925.4,286.4 927.1,286.0 928.9,285.2 930.8,285.0 932.8,284.9 934.6,285.6 936.5,285.6 938.1,286.7 940.1,286.7 941.9,287.1 943.6,287.5 945.4,287.3 947.0,288.3 948.8,288.3 950.0,287.2 951.5,286.4 953.1,285.8 954.7,285.2 956.0,284.2 957.2,283.1 958.9,282.6 960.1,281.4 961.6,280.7 963.3,280.7 964.9,280.5 966.5,279.9 968.1,279.6 969.5,278.8 971.1,278.3 972.7,278.0 972.1,276.1 971.9,274.1 971.6,272.1 971.5,270.1 969.9,269.6 968.7,268.4 967.1,267.8 965.8,266.7 965.0,265.0 964.4,263.3 964.2,261.5 963.6,259.8 962.2,258.5 961.5,256.8 960.5,255.2 960.1,253.4 959.0,251.9 960.7,251.2 962.6,250.8 964.3,250.0 966.0,249.2 967.3,247.7 969.2,247.3" fill="none" stroke="#b0aaaa" stroke-width="0.95" stroke-linejoin="round"/>
<polyline points="941.9,287.1 941.6,288.8 941.2,290.5 940.9,292.3 940.6,294.0 939.8,295.6 939.7,297.4 940.8,298.7 941.0,300.5 942.2,301.8 942.4,303.6 943.2,305.1 944.2,306.5 943.7,308.2 943.4,310.0 942.3,311.5 941.9,313.3" fill="none" stroke="#b0aaaa" stroke-width="0.95" stroke-linejoin="round"/>
<polyline points="972.7,275.8 974.3,276.4 976.0,276.8 977.6,277.4 978.8,279.0 980.6,279.2 981.9,280.7 981.8,282.8 982.9,284.4 984.0,286.0 984.4,287.8 985.3,289.3 985.6,291.1 986.3,292.8 986.6,294.6 987.6,296.2 987.6,298.1 988.6,299.7" fill="none" stroke="#b0aaaa" stroke-width="0.95" stroke-linejoin="round"/>
<polyline points="903.2,304.2 903.4,305.9 904.5,307.2 905.2,308.6 905.3,310.4 906.0,311.8 906.7,313.3 905.6,314.7 904.3,315.9 903.2,317.3 902.1,318.7 901.0,320.1 901.2,321.8 901.4,323.5 901.7,325.2 901.9,326.9 901.4,328.7 902.1,330.4 902.0,332.1 902.1,333.8 902.3,335.5 901.3,337.0 901.5,338.7 901.3,340.3 901.0,341.9 900.7,343.5 901.0,345.2" fill="none" stroke="#b0aaaa" stroke-width="0.95" stroke-linejoin="round"/>
<polyline points="882.9,313.9 882.6,315.7 881.8,317.3 881.0,318.9 880.8,320.7 879.7,322.3 879.5,324.1 879.4,325.7 879.3,327.3 878.7,328.9 879.5,330.5 878.5,332.1 879.2,333.7 878.7,335.3 878.5,336.9 878.8,338.5 878.3,340.1 878.5,341.8 877.7,343.4 878.4,345.1 878.4,346.7 877.5,348.4 878.0,350.0 877.7,351.7 877.9,353.4 877.6,355.0 877.0,356.6 877.2,358.3 877.6,359.9 878.6,361.2 879.3,362.7 879.9,364.2 880.0,365.9 880.6,367.4 880.7,369.2 881.5,370.8 882.4,372.4 882.9,374.1" fill="none" stroke="#b0aaaa" stroke-width="0.95" stroke-linejoin="round"/>
<polyline points="877.2,358.3 879.0,358.2 880.6,357.5 882.3,357.2 884.1,357.2 885.7,356.4 887.4,356.0 888.5,354.7 889.7,353.5 891.1,352.5 892.4,351.4 893.8,350.4 895.0,349.2 896.2,347.9 897.4,346.8 898.8,345.8 901.0,345.2 902.7,345.3 904.2,344.6 905.7,343.8 907.3,343.5 908.9,343.2 910.4,342.7 912.2,343.0 913.7,342.3" fill="none" stroke="#b0aaaa" stroke-width="0.95" stroke-linejoin="round"/>
<polyline points="913.7,342.3 913.1,343.9 913.0,345.7 912.5,347.3 911.5,348.7 911.5,350.5 910.4,352.0 910.2,353.7 911.8,354.3 913.3,355.3 915.2,355.4 916.6,356.5 918.5,356.6 919.8,358.0 921.6,358.3 923.4,358.2 925.1,358.8 926.8,359.2 928.4,360.1 930.3,359.6 931.9,360.5 933.5,360.3 934.8,359.1 936.3,358.5 938.1,358.7 939.5,357.8 941.0,357.1" fill="none" stroke="#b0aaaa" stroke-width="0.95" stroke-linejoin="round"/>
<polyline points="910.2,353.7 910.7,355.3 911.4,356.8 912.2,358.2 912.4,359.9 913.3,361.3 914.4,362.7 914.1,364.6 915.4,365.8 915.9,367.4 915.6,369.1 914.2,370.3 913.6,371.9 912.8,373.4 912.1,374.9 911.4,376.5 912.5,377.9 913.0,379.6 913.7,381.2 914.2,382.9 914.6,384.6 915.2,386.3 915.9,387.9 916.5,389.9 916.7,391.9 916.6,393.9" fill="none" stroke="#b0aaaa" stroke-width="0.95" stroke-linejoin="round"/>
<polyline points="921.6,358.3 922.1,360.0 922.1,361.7 922.1,363.5 922.8,365.1 924.5,364.8 926.2,365.6 927.9,366.1 929.5,366.4 931.3,365.9 933.0,366.2 933.1,368.1 934.3,369.6 934.5,371.4 935.7,372.9 935.8,374.8 936.4,376.5 937.6,377.9 939.4,378.5 940.8,379.7 942.1,381.0 942.0,382.7 942.6,384.2 942.6,385.9 943.1,387.5 943.1,389.1 943.2,390.8 943.2,392.4 944.5,393.7 946.1,394.7 947.6,395.7 948.9,397.0 950.5,397.7 952.4,397.3 954.0,398.4 955.8,398.4 957.5,398.8 959.2,399.2" fill="none" stroke="#b0aaaa" stroke-width="0.95" stroke-linejoin="round"/>
<polyline points="918.5,405.4 920.4,405.0 921.9,404.0 923.4,402.8 925.0,402.0 926.8,402.4 928.6,402.8 930.3,403.3 932.0,404.0 933.1,405.7 933.7,407.6 934.4,409.4 934.7,411.4 934.6,413.1 934.4,414.8 934.8,416.5 934.7,418.2 935.6,419.7 936.1,421.4 936.2,423.3 936.9,424.8 938.3,426.2 938.7,427.9 939.2,429.6 940.8,429.1 942.5,429.4 944.1,428.8 945.8,428.8 947.3,427.8 948.9,427.4 950.6,427.3" fill="none" stroke="#b0aaaa" stroke-width="0.95" stroke-linejoin="round"/>
<polyline points="943.2,392.4 941.8,393.7 940.7,395.2 940.0,396.9 938.9,398.4 938.0,400.0 936.8,401.4 934.8,401.7 933.3,402.7 932.0,404.0" fill="none" stroke="#b0aaaa" stroke-width="0.95" stroke-linejoin="round"/>
<polyline points="934.7,418.2 933.4,419.1 932.4,420.4 931.2,421.5 930.5,423.1 929.4,424.2 927.9,425.0 927.7,426.7 926.2,427.8 925.5,429.3 925.0,430.9 924.4,432.4 923.5,433.8 922.7,435.2 922.0,436.7 922.1,438.5 921.0,439.8 920.3,441.4 920.4,443.2 919.7,444.8 919.4,446.5 918.1,447.9 917.7,449.6 917.7,451.4 916.8,452.9 916.5,454.6 917.6,455.9 919.1,456.6 920.1,457.9 921.5,458.7 922.8,459.7 924.2,460.5 925.6,461.4 927.9,461.5 930.1,461.4" fill="none" stroke="#b0aaaa" stroke-width="0.95" stroke-linejoin="round"/>
<polyline points="903.1,412.2 902.8,413.7 902.6,415.5 902.5,417.2 902.0,419.0 902.4,420.8 901.9,422.5 902.4,424.3 901.9,426.1 901.8,427.8 901.7,429.6 902.4,431.1 902.1,432.8 902.2,434.5 903.3,435.9 903.6,437.5 903.4,439.2 904.0,440.8 904.4,442.3 904.3,444.0 905.1,445.5 905.8,447.3 906.0,449.1 906.6,450.9 907.1,452.7 907.4,454.6 909.2,454.2 911.0,454.7 912.9,454.3 914.7,454.8 916.5,454.6" fill="none" stroke="#b0aaaa" stroke-width="0.95" stroke-linejoin="round"/>
<polyline points="871.4,440.6 873.1,440.3 874.9,440.2 876.6,440.4 878.3,441.1 880.0,440.8 881.8,441.5 883.5,441.0 884.2,442.5 884.2,444.2 884.0,445.9 885.1,447.4 884.9,449.1 885.9,450.6 885.8,452.3 887.5,451.5 889.4,451.2 890.9,450.1 892.6,449.2 894.4,448.7 896.0,447.8 897.2,449.0 898.9,449.4 900.5,450.0 902.0,450.7 903.3,451.8 904.6,452.8 906.2,453.4 907.4,454.6" fill="none" stroke="#b0aaaa" stroke-width="0.95" stroke-linejoin="round"/>
<polyline points="885.8,452.3 885.8,454.1 886.4,455.7 887.7,457.1 887.8,458.8 888.5,460.4 888.8,462.0 889.2,463.7 887.8,464.9 887.0,466.4 886.4,468.1 884.8,469.1 884.0,470.7 883.1,472.2 882.5,473.9 881.2,475.1 880.6,476.8 879.6,478.2 878.1,479.3 877.5,481.0 876.2,482.2 875.3,483.7 873.8,484.8 873.2,486.5" fill="none" stroke="#b0aaaa" stroke-width="0.95" stroke-linejoin="round"/>
<polyline points="836.8,454.6 837.1,456.4 838.0,457.8 838.7,459.4 840.1,460.6 840.3,462.4 841.0,463.9 841.8,465.4 842.7,466.9 843.7,468.3" fill="none" stroke="#b0aaaa" stroke-width="0.95" stroke-linejoin="round"/>
<polyline points="793.8,415.9 795.6,416.3 797.5,416.7 799.2,417.6 801.0,418.1 802.9,418.2 803.5,419.8 804.3,421.1 804.9,422.7 805.8,424.0 807.1,425.2 807.9,426.5 808.5,428.1 809.2,429.6 810.5,430.6 811.0,432.2 812.0,433.5 813.0,434.8 813.3,436.5 813.9,438.1 814.9,439.4 815.8,440.7 816.6,442.1 818.4,442.3 820.0,441.7 821.7,441.4 823.4,441.0 824.2,439.5 825.5,438.5 826.3,437.0 827.1,435.6 828.7,434.7 829.4,433.2 830.3,431.8" fill="none" stroke="#b0aaaa" stroke-width="0.95" stroke-linejoin="round"/>
<polyline points="846.0,377.0 847.8,377.2 849.5,377.9 851.2,378.5 853.0,378.4 854.7,379.1 856.5,379.3 857.9,380.4 859.3,381.4 860.6,382.6 862.3,383.4 863.6,384.5 865.3,385.1 867.1,385.0 868.9,385.2 870.5,386.4 872.3,386.3" fill="none" stroke="#b0aaaa" stroke-width="0.95" stroke-linejoin="round"/>
<polyline points="862.7,384.5 862.2,386.2 861.8,388.0 860.6,389.3 859.4,390.7 858.9,392.5 857.8,393.9 857.1,395.6 855.7,396.8 854.3,397.7 853.4,399.0 852.1,400.0 850.8,401.1 849.5,402.0 847.7,401.9 846.0,401.5 844.3,401.2 843.5,403.2 842.7,405.2 842.5,407.3 843.3,408.8 844.5,410.1 845.4,411.5 846.4,412.9 847.2,414.4 847.8,416.0" fill="none" stroke="#b0aaaa" stroke-width="0.95" stroke-linejoin="round"/>
<polyline points="865.1,400.6 866.2,402.2 866.4,404.1 867.4,405.7 868.5,407.2 869.2,409.0 869.7,410.8 869.2,412.4 869.0,414.1 868.0,415.5 868.4,417.3 867.3,418.7 867.1,420.4" fill="none" stroke="#b0aaaa" stroke-width="0.95" stroke-linejoin="round"/>
<polyline points="835.5,376.6 837.3,376.8 839.0,375.7 840.8,376.2 842.5,375.4 844.2,374.9 846.0,374.8 847.8,374.9 848.1,373.2 848.2,371.6 848.8,370.0 848.6,368.2 848.9,366.6 849.7,365.0 850.3,363.4 849.8,361.6 850.4,360.0" fill="none" stroke="#b0aaaa" stroke-width="0.95" stroke-linejoin="round"/>
<rect x="989.5" y="452.5" width="44.5" height="63.5" fill="#fff" stroke="#b5b5b5" stroke-width="1.2"/>
<path d="M990,453 L1026,453 Q1012,460 997,462 Z" fill="#e6eeee" stroke="#c8c8c8" stroke-width="0.5"/>
<path d="M1025,453 L1029,459 L1033,453" fill="#e6eeee" stroke="#c8c8c8" stroke-width="0.5"/>
<line x1="999" y1="464" x2="1002" y2="469" stroke="#a8a8a8" stroke-width="1"/>
<line x1="998" y1="475" x2="999" y2="479" stroke="#a8a8a8" stroke-width="1"/>
<line x1="1001" y1="486" x2="1004" y2="483" stroke="#a8a8a8" stroke-width="1"/>
<line x1="995" y1="495" x2="995" y2="498" stroke="#a8a8a8" stroke-width="1"/>
<line x1="1008" y1="507" x2="1004" y2="509" stroke="#a8a8a8" stroke-width="1"/>
<line x1="1012" y1="499" x2="1011" y2="501" stroke="#a8a8a8" stroke-width="1"/>
<line x1="1017" y1="496" x2="1019" y2="491" stroke="#a8a8a8" stroke-width="1"/>
<line x1="1015" y1="487" x2="1017" y2="484" stroke="#a8a8a8" stroke-width="1"/>
<line x1="1024" y1="486" x2="1025" y2="483" stroke="#a8a8a8" stroke-width="1"/>
<line x1="1025" y1="474" x2="1025" y2="477" stroke="#a8a8a8" stroke-width="1"/>
<line x1="1027" y1="465" x2="1026" y2="467" stroke="#a8a8a8" stroke-width="1"/>
<line x1="1031" y1="458" x2="1029" y2="461" stroke="#a8a8a8" stroke-width="1"/>
<line x1="1020" y1="484" x2="1020" y2="481" stroke="#a8a8a8" stroke-width="1"/>
<circle cx="886" cy="532" r="0.7" fill="#999"/>
<circle cx="883" cy="535" r="0.7" fill="#999"/>
<circle cx="893" cy="534" r="0.7" fill="#999"/>
<circle cx="887" cy="539" r="0.7" fill="#999"/>
<circle cx="892" cy="537" r="0.7" fill="#999"/>
<circle cx="903" cy="541" r="0.7" fill="#999"/>
<circle cx="908" cy="538" r="0.7" fill="#999"/>
<circle cx="910" cy="541" r="0.7" fill="#999"/>
<circle cx="902" cy="543" r="0.7" fill="#999"/>
<circle cx="908" cy="545" r="0.7" fill="#999"/>
<circle cx="972.5" cy="444.4" r="0.7" fill="#999"/>
</svg>
<svg style="left:0;top:0" width="1316" height="571" viewBox="0 0 1316 571">
<g fill="none" stroke="#444" stroke-width="1.3" stroke-linecap="round" stroke-linejoin="round">
  <!-- refresh -->
  <path d="M13.6,19.6 A7,7 0 0 1 26.8,20.6"/>
  <path d="M26.4,23.8 A7,7 0 0 1 13.2,22.8"/>
</g>
<path d="M12.6,18.4 L15.6,19.2 L13.2,21.2 Z" fill="#444"/>
<path d="M27.4,25 L24.4,24.2 L26.8,22.2 Z" fill="#444"/>
<g fill="none" stroke="#444" stroke-width="1.3" stroke-linejoin="round">
  <!-- save -->
  <rect x="47.8" y="15.6" width="12.4" height="12.5" rx="1.6"/>
  <path d="M51,15.6 V17.6 H57 V15.6"/>
  <path d="M50.7,28.1 V21.6 H57.3 V28.1"/>
  <!-- save as -->
  <path d="M94.4,21 V17.2 A1.6,1.6 0 0 0 92.8,15.6 H83.5 A1.6,1.6 0 0 0 81.9,17.2 V26.5 A1.6,1.6 0 0 0 83.5,28.1 H92.8 A1.6,1.6 0 0 0 94.4,26.5 V26"/>
  <path d="M85,15.6 V17.6 H91 V15.6"/>
  <path d="M84.7,28.1 V21.6 H91.3 V22"/>
  <path d="M88,24.4 H94.6 M92.6,22.6 L94.6,24.4 L92.6,26.2" stroke-width="1.1"/>
  <!-- preview -->
  <path d="M125.5,15.5 H117.2 A1.6,1.6 0 0 0 115.6,17.1 V26.5 A1.6,1.6 0 0 0 117.2,28.1 H118.5"/>
  <path d="M125.5,15.5 A2,2 0 0 1 127.6,17.4"/>
  <circle cx="122.8" cy="22.3" r="4.6"/>
  <path d="M126.1,25.6 L128.2,27.8"/>
</g>
<g fill="none" stroke="#444" stroke-width="1.25" stroke-linejoin="round">
  <!-- schedule -->
  <path d="M155.4,27.2 H148.8 V15.6 H160.2 V19.4"/>
  <path d="M150,22.5 L152.2,19.8 L154,21.6 L157.4,16.8" stroke-width="1"/>
  <path d="M150.6,24.2 V26.4 M152.4,25 V26.4" stroke-width="1"/>
  <circle cx="159.6" cy="24.4" r="4.1" fill="#fff"/>
  <path d="M159.3,21.8 V24.6 H161.6" stroke-width="1"/>
  <!-- star -->
  <path d="M190,14.6 L192.3,19.6 L197.6,20.2 L193.6,23.8 L194.8,29.2 L190,26.5 L185.2,29.2 L186.4,23.8 L182.4,20.2 L187.7,19.6 Z"/>
  <!-- monitor -->
  <rect x="225.6" y="15.6" width="12.8" height="9.6"/>
  <path d="M232,25.2 V28.4 M228.2,28.6 H235.8"/>
</g>
<rect x="207" y="12" width="1" height="20" fill="#d0d0d0"/>
<rect x="591" y="13" width="1" height="19" fill="#d0d0d0"/>
<g fill="none" stroke="#555" stroke-width="1" stroke-linecap="round" stroke-linejoin="round">
  <path d="M244.2,22 L247.3,25 L250.4,22"/>
  <path d="M300.3,22.2 L303.5,25.3 L306.7,22.2"/>
  <path d="M356.3,22.2 L359.5,25.3 L362.7,22.2"/>
  <path d="M830.7,22.2 L833.4,25 L836.1,22.2"/>
  <path d="M412.2,22.2 L415.3,25.3 L418.4,22.2" stroke="#d8dde8"/>
</g>
<!-- refresh now button -->

<g fill="none" stroke="#2ea0cc" stroke-width="1.2" stroke-linecap="round">
  <path d="M453.6,19.2 A6.4,6.4 0 1 0 453.4,25.6"/>
  <path d="M445.4,25.6 L447.8,18.8 L450.2,25.6 M446.3,23.4 H449.3" stroke-width="1.1"/>
</g>
<path d="M455,18.2 L451.6,19 L454.4,21.4 Z" fill="#2ea0cc"/>
<!-- table icons -->
<g fill="#333">
  <rect x="632" y="15" width="16" height="15" rx="0.8"/>
  <rect x="666" y="15" width="16" height="15" rx="0.8"/>
</g>
<g fill="#fff">
  <rect x="633.5" y="21.2" width="3.6" height="1.8" rx="0.6"/><rect x="638.4" y="21.2" width="3.6" height="1.8" rx="0.6"/><rect x="643.2" y="21.2" width="3.6" height="1.8" rx="0.6"/>
  <rect x="633.5" y="24.2" width="3.6" height="1.8" rx="0.6"/><rect x="638.4" y="24.2" width="3.6" height="1.8" rx="0.6"/><rect x="643.2" y="24.2" width="3.6" height="1.8" rx="0.6"/>
  <rect x="633.5" y="27.2" width="3.6" height="1.8" rx="0.6"/><rect x="638.4" y="27.2" width="3.6" height="1.8" rx="0.6"/><rect x="643.2" y="27.2" width="3.6" height="1.8" rx="0.6"/>
  <rect x="667.2" y="21.2" width="3.6" height="7.8"/>
  <rect x="672" y="21.2" width="3.8" height="1.8" rx="0.6"/><rect x="677" y="21.2" width="3.8" height="1.8" rx="0.6"/>
  <rect x="672" y="24.2" width="3.8" height="1.8" rx="0.6"/><rect x="677" y="24.2" width="3.8" height="1.8" rx="0.6"/>
  <rect x="672" y="27.2" width="3.8" height="1.8" rx="0.6"/><rect x="677" y="27.2" width="3.8" height="1.8" rx="0.6"/>
</g>
<!-- bar chart icon -->
<g fill="#333">
  <rect x="701" y="19.1" width="3.7" height="8.6"/>
  <rect x="706" y="15.1" width="3.8" height="12.6"/>
  <rect x="711.2" y="21" width="3.8" height="6.7"/>
  <rect x="700.1" y="28.8" width="15.9" height="1.2"/>
</g>
<!-- text icon -->
<g fill="none" stroke="#333" stroke-width="1.2">
  <rect x="734.6" y="14.6" width="14.6" height="14.6"/>
</g>
<g fill="#333">
  <path d="M737,17.2 H744 V19.2 H743.3 V18.1 H741.1 V24.6 H742.2 V25.4 H738.8 V24.6 H739.9 V18.1 H737.7 V19.2 H737 Z"/>
  <rect x="744.8" y="17.6" width="2.6" height="1"/><rect x="744.8" y="20.6" width="2.6" height="1"/><rect x="744.8" y="23.6" width="2.6" height="1"/>
  <rect x="736.6" y="26.4" width="10.8" height="1"/>
</g>
<!-- image icon -->
<rect x="768.6" y="14.6" width="14.8" height="14.6" fill="none" stroke="#333" stroke-width="1.2"/>
<path d="M770.5,27.6 L773.6,21.4 L775.8,24 L778.2,20.8 L781.6,27.6 Z" fill="#333"/>
<circle cx="780" cy="17.6" r="1.1" fill="#333"/>
<!-- share -->
<g fill="none" stroke="#555" stroke-width="1.1">
  <circle cx="1107.3" cy="21.5" r="2.3"/>
  <circle cx="1116.4" cy="17.1" r="2.3"/>
  <circle cx="1116.4" cy="26.1" r="2.3"/>
  <path d="M1109.4,20.4 L1114.3,18.1 M1109.4,22.6 L1114.3,25"/>
  <!-- comment -->
  <path d="M1140.2,26.2 A6.9,5.7 0 1 0 1138.2,24.2 L1138.4,27.6 Z"/>
  <!-- like -->
  <path d="M1184.2,22.2 L1187.8,17.8 L1188.4,15.6 Q1190.6,15.4 1190.4,18.6 L1189.6,21 H1194 Q1195.2,21.4 1194.8,23 L1193.6,27.6 Q1193.2,28.4 1192,28.4 H1184.2 Z"/>
  <rect x="1181.8" y="22.4" width="1.6" height="6" />
</g>
<g fill="#555"><circle cx="1141.2" cy="21" r="0.8"/><circle cx="1144" cy="21" r="0.8"/><circle cx="1146.8" cy="21" r="0.8"/></g>
<!-- logo -->
<rect x="1237.1" y="14.9" width="6.6" height="6.7" fill="#2b9fd0"/>
<rect x="1245" y="14.9" width="6.8" height="6.7" fill="#f5b92b"/>
<rect x="1237.1" y="22.9" width="6.6" height="7.1" fill="#2b9fd0"/>
<rect x="1245" y="22.9" width="6.8" height="7.1" fill="#2b9fd0"/>
<!-- ===== left panel icons ===== -->
<g fill="none" stroke="#c4c8d0" stroke-width="1.1" stroke-linecap="round">
  <circle cx="113.4" cy="86.6" r="3.4"/>
  <path d="M115.9,89.1 L118,91.2"/>
  <path d="M127.3,84.6 L132.5,89.8 L137.7,84.6"/>
</g>
<g fill="none" stroke="#444" stroke-width="1.2" stroke-linecap="round">
  <path d="M154.4,85.8 A6.8,6.8 0 0 1 167.6,86.8"/>
  <path d="M167.6,90 A6.8,6.8 0 0 1 154.4,89"/>
</g>
<path d="M153.6,84.6 L156.4,85.6 L154,87.4 Z" fill="#444"/>
<path d="M168.4,91.2 L165.6,90.2 L168,88.4 Z" fill="#444"/>
<g fill="#444"><rect x="180" y="81.6" width="2" height="2"/><rect x="180" y="87" width="2" height="2"/><rect x="180" y="92.4" width="2" height="2"/></g>
<g fill="none" stroke="#444" stroke-width="1.3" stroke-linecap="round">
  <circle cx="178.6" cy="122.6" r="4.8"/>
  <path d="M182.2,126.2 L185.2,129.2"/>
</g>
<!-- layers icons -->
<path d="M33,143.8 L40.3,147.4 L33,151 L25.7,147.4 Z" fill="#333"/>
<path d="M25.7,150.2 L33,153.8 L40.3,150.2 V151.9 L33,155.5 L25.7,151.9 Z" fill="#333"/>
<path d="M25.7,154.4 L33,158 L40.3,154.4 V156.1 L33,159.7 L25.7,156.1 Z" fill="#333"/>
<path d="M33,216.2 L40.2,220.2 L33,224.2 L25.8,220.2 Z" fill="#333"/>
<path d="M26.2,223 L33,226.8 L39.8,223 L40.2,224.4 L33,228.4 L25.8,224.4 Z" fill="#333"/>
<!-- globe icons -->
<g fill="none" stroke="#999" stroke-width="0.9">
  <circle cx="51.2" cy="174.9" r="5.6"/>
  <ellipse cx="51.2" cy="174.9" rx="2.6" ry="5.6"/>
  <path d="M45.8,173 H56.6 M45.8,176.8 H56.6 M51.2,169.3 V180.5"/>
  <circle cx="51.2" cy="199.4" r="5.6"/>
  <ellipse cx="51.2" cy="199.4" rx="2.6" ry="5.6"/>
  <path d="M45.8,197.5 H56.6 M45.8,201.3 H56.6 M51.2,193.8 V205"/>
</g>
<!-- folder icons -->
<path d="M25.6,241 H31.6 L33,242.6 H40.3 V253.6 H25.6 Z" fill="#333"/>
<path d="M25.6,264.8 H31.6 L33,266.4 H40.3 V277.4 H25.6 Z" fill="#333"/>
<rect x="25.6" y="244" width="14.7" height="0.8" fill="#fff"/><rect x="25.6" y="267.8" width="14.7" height="0.8" fill="#fff"/>
<!-- measure calc icons -->
<g fill="#444">
  <rect x="44" y="501.6" width="3" height="7.2"/>
  <rect x="44" y="525.6" width="3" height="7.2"/>
  <rect x="44" y="549.6" width="3" height="7.2"/>
</g>
<g fill="#ddd">
  <rect x="44.8" y="503.6" width="1.4" height="0.8"/><rect x="44.8" y="505.8" width="1.4" height="0.8"/>
  <rect x="44.8" y="527.6" width="1.4" height="0.8"/><rect x="44.8" y="529.8" width="1.4" height="0.8"/>
  <rect x="44.8" y="551.6" width="1.4" height="0.8"/><rect x="44.8" y="553.8" width="1.4" height="0.8"/>
</g>
<!-- ===== shelf icons ===== -->
<g fill="#7d8ba0">
  <rect x="213" y="48.2" width="2.4" height="1.8"/><rect x="213" y="51.4" width="2.4" height="8.3"/>
  <rect x="217.8" y="48.2" width="2.4" height="1.8"/><rect x="217.8" y="51.4" width="2.4" height="8.3"/>
  <rect x="222.6" y="48.2" width="2.4" height="1.8"/><rect x="222.6" y="51.4" width="2.4" height="8.3"/>
  <rect x="213" y="75.8" width="2.2" height="1.6"/><rect x="216.6" y="75.8" width="8.6" height="1.6"/>
  <rect x="213" y="81" width="2.2" height="1.6"/><rect x="216.6" y="81" width="8.6" height="1.6"/>
  <rect x="213" y="86.2" width="2.2" height="1.6"/><rect x="216.6" y="86.2" width="8.6" height="1.6"/>
</g>
<!-- funnel -->
<path d="M209,107.6 H220.4 L216,113.2 V119 L213.4,117.4 V113.2 Z" fill="#6f7d92"/>
<!-- pin -->
<path d="M216.4,283.6 L221.6,288.8 L219.8,289.4 L217.4,292.6 L217.6,295 L210.2,287.6 L212.6,287.8 L215.8,285.4 Z" fill="#7a889c"/>
<path d="M213.2,291 L208.2,296.4" stroke="#7a889c" stroke-width="1.4" stroke-linecap="round"/>
<!-- china small icon -->
<path d="M210.9,317.7 L212.3,316.3 L214.4,316.1 L215.8,317.7 L217.9,318.2 L219.7,317 L220.4,315.3 L221.4,314.6 L223.2,316 L222.5,317.7 L221.1,319.8 L221.4,321.9 L220.7,323.7 L218.6,324.7 L216.5,324.4 L215.8,322.3 L213,321.6 L211.3,320.2 Z" fill="#2ea0cf" stroke="#2ea0cf" stroke-width="0.6" stroke-linejoin="round"/>
<path d="M226.2,321.2 L232.3,321.2 L229.25,324.4 Z" fill="#b8b8b8"/>
<path d="M318.6,318.4 L323.9,323.4 L329.2,318.4" fill="none" stroke="#c0c4cc" stroke-width="1.1" stroke-linecap="round"/>
<!-- color circles -->
<g opacity="0.8">
  <circle cx="227.7" cy="344.4" r="4.9" fill="#8fd3f5"/>
  <circle cx="223.8" cy="349.2" r="4.9" fill="#f77a80"/>
  <circle cx="231.3" cy="349.2" r="4.9" fill="#f9e46e"/>
</g>
<g opacity="0.8">
  <circle cx="216.4" cy="391.6" r="4.5" fill="#8fd3f5"/>
  <circle cx="213.1" cy="397.2" r="4.5" fill="#f77a80"/>
  <circle cx="219.5" cy="397.2" r="4.5" fill="#f9e46e"/>
</g>
<!-- T -->
<path d="M267.4,339.8 H279.8 V342.8 H279 L278.6,340.8 H274.4 V352.8 L276.4,353.2 V354 H270.6 V353.2 L272.6,352.8 V340.8 H268.4 L268,342.8 H267.4 Z" fill="#444"/>
<!-- bubble -->
<path d="M311.8,340.8 H325.6 V350.6 H317.6 L314.6,353.8 V350.6 H311.8 Z" fill="none" stroke="#444" stroke-width="1.1" stroke-linejoin="round"/>
<!-- ===== canvas decorations ===== -->
<circle cx="356.4" cy="99.4" r="3.5" fill="#409eff"/>
<circle cx="835.5" cy="99.2" r="3.5" fill="#409eff"/>
<circle cx="356.2" cy="343" r="3.5" fill="#409eff"/>
<circle cx="1311.3" cy="343" r="3.5" fill="#409eff"/>
<rect x="1305.8" y="81" width="8.2" height="56.8" rx="4.1" fill="#666"/>
<rect x="1310.6" y="99" width="1" height="38" fill="#1d4a80"/>
<g fill="#55dd55">
  <rect x="1307.2" y="117.4" width="5.6" height="1"/><rect x="1307.2" y="119.4" width="5.6" height="1"/><rect x="1307.2" y="121.4" width="5.6" height="1"/><rect x="1307.2" y="123.4" width="5.6" height="1"/><rect x="1307.2" y="125.4" width="5.6" height="1"/><rect x="1307.2" y="127.4" width="5.6" height="1"/><rect x="1307.2" y="129.4" width="5.6" height="1"/><rect x="1307.2" y="131.4" width="5.6" height="1"/><rect x="1307.2" y="133.4" width="5.6" height="1"/><rect x="1307.2" y="135.4" width="4.6" height="1"/>
</g>
<circle cx="1311.1" cy="99.3" r="3" fill="#1d4a80"/>

</svg>

</body></html>
